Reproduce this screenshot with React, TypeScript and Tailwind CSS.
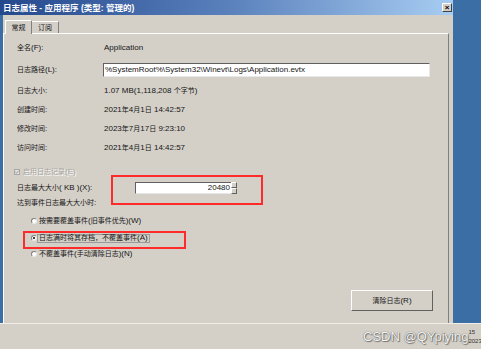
import React from "react";

const font = { fontFamily: '"Liberation Sans", "Noto Sans CJK SC", sans-serif' };

const CJK = /([\u3000-\u9fff\uff00-\uffef]+)/;

function M({ t }: { t: string }) {
  return (
    <>
      {t.split(CJK).map((p, i) =>
        i % 2 === 1 ? (
          <span key={i} className="text-[7px]">
            {p}
          </span>
        ) : (
          <React.Fragment key={i}>{p}</React.Fragment>
        )
      )}
    </>
  );
}

function Row({ label, value, mt }: { label: string; value: string; mt: string }) {
  return (
    <div className={`flex items-center h-[12px] whitespace-pre ${mt}`}>
      <div className="w-[87px] shrink-0">
        <M t={label} />
      </div>
      <div className="flex-1 flex items-center">
        <span>
          <M t={value} />
        </span>
      </div>
    </div>
  );
}

function Radio({ checked }: { checked?: boolean }) {
  return (
    <span className="w-[6px] h-[6px] rounded-full bg-white border border-t-[#808080] border-l-[#808080] border-r-[#e8e8e8] border-b-[#e8e8e8] flex items-center justify-center shrink-0">
      {checked ? <span className="w-[2px] h-[2px] rounded-full bg-black" /> : null}
    </span>
  );
}

export default function App() {
  return (
    <div
      className="relative w-[481px] h-[349px] bg-[#d4d0c8] flex flex-col overflow-hidden text-[8px] leading-[12px] text-[#151515]"
      style={font}
    >
      <div className="flex h-[323px]">
        <div className="w-[453px] flex flex-col">
          {/* title bar */}
          <div className="h-[15px] flex items-center pl-[3px] pr-[1px] bg-gradient-to-r from-[#24488c] via-[#5a80bc] to-[#a8cdf2]">
            <span className="text-white font-bold text-[8.5px] leading-[10px] flex-1 whitespace-nowrap">
              日志属性 - 应用程序 (类型: 管理的)
            </span>
            <span className="w-[10px] h-[9px] bg-[#d4d0c8] border border-t-white border-l-white border-r-[#404040] border-b-[#404040] flex items-center justify-center text-[8px] leading-[8px] font-bold text-black">
              ×
            </span>
          </div>
          <div className="flex flex-1">
            <div className="w-[3px] bg-[#3a6ea5]" />
            <div className="flex-1 flex flex-col pt-[4px] pr-[4px]">
              {/* tabs */}
              <div className="flex items-end h-[14px] pl-[2px]">
                <div className="w-[27px] h-[14px] bg-[#d4d0c8] border-t border-l border-white border-r border-r-[#808080] flex items-center justify-center -mb-px relative z-10 text-[7px]">
                  常规
                </div>
                <div className="w-[27px] h-[12px] border-t border-white border-r border-r-[#808080] flex items-center justify-center text-[7px]">
                  订阅
                </div>
              </div>
              {/* panel */}
              <div className="flex-1 border-t border-l border-white border-r border-r-[#808080] flex flex-col pl-[13px]">
                <Row label="全名(F):" value="Application" mt="mt-[8px]" />
                <div className="flex items-center h-[14px] mt-[9px]">
                  <div className="w-[87px] shrink-0">
                    <M t="日志路径(L):" />
                  </div>
                  <div className="-ml-px w-[327px] h-[14px] bg-white border-t border-l border-[#606060] border-r border-r-[#e8e8e8] border-b border-b-[#e8e8e8] flex items-center pl-[1px] whitespace-nowrap overflow-hidden">
                    %SystemRoot%\System32\Winevt\Logs\Application.evtx
                  </div>
                </div>
                <Row label="日志大小:" value="1.07 MB(1,118,208 个字节)" mt="mt-[8px]" />
                <Row label="创建时间:" value="2021年4月1日 14:42:57" mt="mt-[7px]" />
                <Row label="修改时间:" value="2023年7月17日 9:23:10" mt="mt-[7px]" />
                <Row label="访问时间:" value="2021年4月1日 14:42:57" mt="mt-[7px]" />
                <div className="flex items-center h-[12px] mt-[12px] -ml-[3px]">
                  <span className="w-[6px] h-[6px] bg-[#e4e2dc] border border-[#a8a8a8] flex items-center justify-center shrink-0">
                    <svg width="4" height="4" viewBox="0 0 4 4">
                      <path d="M0.3 2 L1.5 3.2 L3.7 0.8" stroke="#9a9a9a" strokeWidth="1" fill="none" />
                    </svg>
                  </span>
                  <span className="ml-[3px] text-[#a7a49e]" style={{ textShadow: "1px 1px 0 #ffffff" }}>
                    <M t="启用日志记录(E)" />
                  </span>
                </div>
                <div className="flex items-center h-[13px] mt-[3px]">
                  <div className="w-[87px] shrink-0 whitespace-nowrap">
                    <M t="日志最大大小( KB )(X):" />
                  </div>
                  <div className="ml-[31px] flex items-center">
                    <div className="w-[96px] h-[12px] bg-white border-t border-l border-[#606060] border-b border-b-[#e8e8e8] flex items-center justify-end pr-[1px]">
                      20480
                    </div>
                    <div className="w-[6px] h-[12px] flex flex-col">
                      <span className="flex-1 bg-[#d4d0c8] border border-t-white border-l-white border-r-[#606060] border-b-[#606060]" />
                      <span className="flex-1 bg-[#d4d0c8] border border-t-white border-l-white border-r-[#606060] border-b-[#606060]" />
                    </div>
                  </div>
                </div>
                <div className="flex items-center h-[12px] mt-[3px]">
                  <M t="达到事件日志最大大小时:" />
                </div>
                <div className="flex items-center h-[12px] mt-[6px] ml-[14px] whitespace-nowrap">
                  <Radio />
                  <span className="ml-[2px]">
                    <M t="按需要覆盖事件(旧事件优先)(W)" />
                  </span>
                </div>
                <div className="flex items-center h-[12px] mt-[5px] ml-[14px] whitespace-nowrap">
                  <Radio checked />
                  <span className="px-[1px] h-[9px] leading-[8px] border border-[#9a9a9a] flex items-center">
                    <M t="日志满时将其存档，不覆盖事件(A)" />
                  </span>
                </div>
                <div className="flex items-center h-[12px] mt-[4px] ml-[14px] whitespace-nowrap">
                  <Radio />
                  <span className="ml-[2px]">
                    <M t="不覆盖事件(手动清除日志)(N)" />
                  </span>
                </div>
                <div className="flex justify-end mt-[30px] mr-[15px]">
                  <div className="w-[82px] h-[21px] border border-t-white border-l-white border-r-[#606060] border-b-[#606060] flex items-center justify-center">
                    <M t="清除日志(R)" />
                  </div>
                </div>
              </div>
            </div>
          </div>
        </div>
        <div className="flex-1 bg-[#3a6ea5]" />
      </div>
      {/* bottom bar */}
      <div className="flex-1 border-t border-[#f0eee8] flex items-center relative">
        <span
          className="ml-[363px] text-[13px] leading-[16px] text-[#f4f4f4] whitespace-nowrap"
          style={{ textShadow: "0 0 1px #444, 1px 1px 1px #777" }}
        >
          CSDN @QYpiying
        </span>
        <div className="ml-auto mr-px flex flex-col text-[6px] leading-[9px] text-[#333]">
          <span>15</span>
          <span>2023</span>
        </div>
      </div>
      {/* annotations */}
      <div className="absolute left-[111px] top-[175px] w-[152px] h-[30px] border-2 border-[#ff2a2a] pointer-events-none" />
      <div className="absolute left-[23px] top-[231px] w-[163px] h-[18px] border-2 border-[#ff2a2a] pointer-events-none" />
    </div>
  );
}
